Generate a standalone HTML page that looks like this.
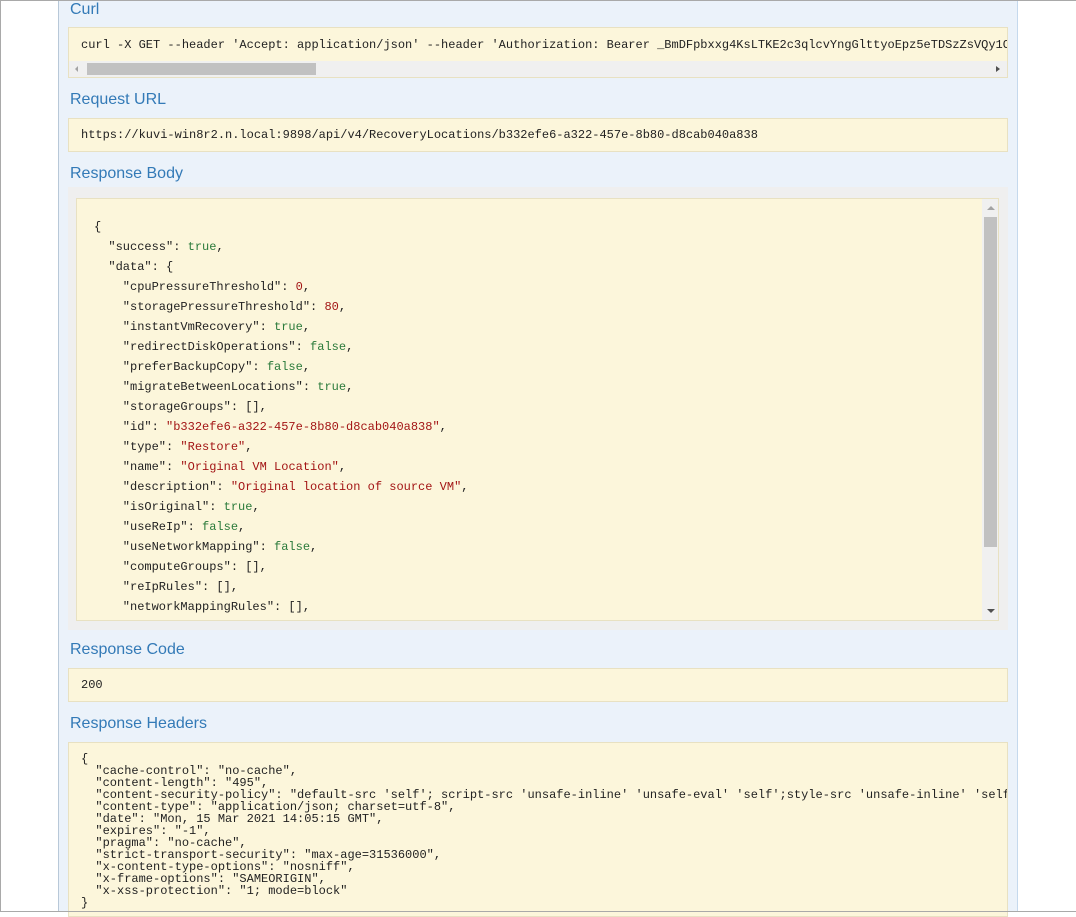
<!DOCTYPE html>
<html><head><meta charset="utf-8"><style>
*{margin:0;padding:0;box-sizing:border-box}
body{width:1076px;height:912px;background:#fff;position:relative;overflow:hidden;font-family:"Liberation Sans",Arial,sans-serif}
.frame{position:absolute;left:0;top:0;width:1076px;height:912px;border:1px solid #a9a9a9;border-right:none}
.panel{position:absolute;left:58px;top:1px;width:960px;height:911px;background:#ebf2fa;border-left:1px solid #b8c8d8;border-right:1px solid #c5d9ed}
h4{position:absolute;left:70px;font-weight:normal;font-size:16px;color:#337ab7;line-height:18px}
.box{position:absolute;left:68px;width:940px;background:#fcf6db;border:1px solid #e8e1c2;font-family:"Liberation Mono",monospace;font-size:12px;color:#222;white-space:pre;overflow:hidden}
.s{color:#a31515}.b{color:#2a7a3a}.n{color:#a31515}
</style></head><body>
<div class="frame"></div>
<div class="panel"></div>

<h4 style="top:1px">Curl</h4>
<div class="box" style="top:27px;height:51px">
<div style="position:absolute;left:12px;top:10px;line-height:14px">curl -X GET --header 'Accept: application/json' --header 'Authorization: Bearer _BmDFpbxxg4KsLTKE2c3qlcvYngGlttyoEpz5eTDSzZsVQy1Ox</div>
<div style="position:absolute;left:0;top:33px;width:938px;height:17px;background:#f0f0f0"></div>
<div style="position:absolute;left:18px;top:35px;width:229px;height:12px;background:#c1c1c1"></div>
<div style="position:absolute;left:6px;top:38px;width:0;height:0;border-top:3px solid transparent;border-bottom:3px solid transparent;border-right:3px solid #a3a3a3"></div>
<div style="position:absolute;left:927px;top:38px;width:0;height:0;border-top:3px solid transparent;border-bottom:3px solid transparent;border-left:4px solid #505050"></div>
</div>

<h4 style="top:91px">Request URL</h4>
<div class="box" style="top:118px;height:34px"><div style="position:absolute;left:12px;top:9px;line-height:14px">https://kuvi-win8r2.n.local:9898/api/v4/RecoveryLocations/b332efe6-a322-457e-8b80-d8cab040a838</div></div>

<h4 style="top:165px">Response Body</h4>
<div style="position:absolute;left:68px;top:187px;width:940px;height:443px;background:#efefef"></div>
<div class="box" style="left:76px;top:198px;width:923px;height:423px">
<div style="position:absolute;left:17px;top:18px;line-height:20px">{
  "success": <span class="b">true</span>,
  "data": {
    "cpuPressureThreshold": <span class="n">0</span>,
    "storagePressureThreshold": <span class="n">80</span>,
    "instantVmRecovery": <span class="b">true</span>,
    "redirectDiskOperations": <span class="b">false</span>,
    "preferBackupCopy": <span class="b">false</span>,
    "migrateBetweenLocations": <span class="b">true</span>,
    "storageGroups": [],
    "id": <span class="s">"b332efe6-a322-457e-8b80-d8cab040a838"</span>,
    "type": <span class="s">"Restore"</span>,
    "name": <span class="s">"Original VM Location"</span>,
    "description": <span class="s">"Original location of source VM"</span>,
    "isOriginal": <span class="b">true</span>,
    "useReIp": <span class="b">false</span>,
    "useNetworkMapping": <span class="b">false</span>,
    "computeGroups": [],
    "reIpRules": [],
    "networkMappingRules": [],
    "x": []</div>
<div style="position:absolute;left:905px;top:0;width:17px;height:421px;background:#f0f0f0"></div>
<div style="position:absolute;left:907px;top:18px;width:13px;height:330px;background:#c1c1c1"></div>
<div style="position:absolute;left:910px;top:7px;width:0;height:0;border-left:4px solid transparent;border-right:4px solid transparent;border-bottom:4px solid #a3a3a3"></div>
<div style="position:absolute;left:910px;top:410px;width:0;height:0;border-left:4px solid transparent;border-right:4px solid transparent;border-top:4px solid #505050"></div>
</div>

<h4 style="top:641px">Response Code</h4>
<div class="box" style="top:668px;height:34px"><div style="position:absolute;left:12px;top:9px;line-height:14px">200</div></div>

<h4 style="top:715px">Response Headers</h4>
<div class="box" style="top:742px;height:175px"><div style="position:absolute;left:12px;top:10px;line-height:12px">{
  "cache-control": "no-cache",
  "content-length": "495",
  "content-security-policy": "default-src 'self'; script-src 'unsafe-inline' 'unsafe-eval' 'self';style-src 'unsafe-inline' 'self'",
  "content-type": "application/json; charset=utf-8",
  "date": "Mon, 15 Mar 2021 14:05:15 GMT",
  "expires": "-1",
  "pragma": "no-cache",
  "strict-transport-security": "max-age=31536000",
  "x-content-type-options": "nosniff",
  "x-frame-options": "SAMEORIGIN",
  "x-xss-protection": "1; mode=block"
}</div></div>
<div style="position:absolute;left:0;top:911px;width:1076px;height:1px;background:#a9a9a9"></div>
</body></html>
